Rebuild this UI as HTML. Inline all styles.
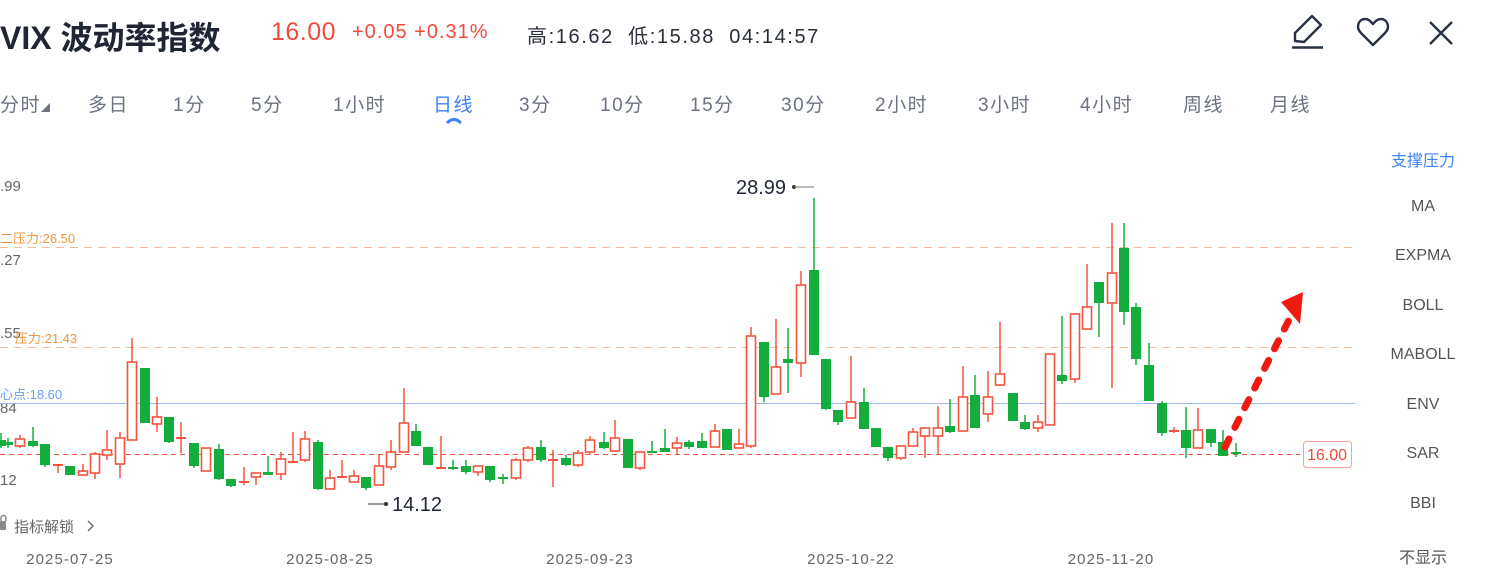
<!DOCTYPE html>
<html><head><meta charset="utf-8"><style>
body{margin:0;width:1497px;height:577px;background:#fff;overflow:hidden;position:relative;font-family:"Liberation Sans","Noto Sans CJK SC",sans-serif}
.a{position:absolute;white-space:nowrap}
.tab{position:absolute;top:90px;font-size:19px;color:#6b7280;letter-spacing:1.5px}
.side{position:absolute;left:1373px;width:100px;text-align:center;font-size:16px;color:#555}
.lbl{position:absolute;font-size:14px;color:#666}
.dt{position:absolute;top:551px;font-size:15px;color:#666;width:140px;text-align:center;letter-spacing:1.1px}
</style></head><body>
<div class="a" style="left:0;top:13px;font-size:32px;font-weight:bold;color:#1f2533">VIX 波动率指数</div>
<div class="a" style="left:271px;top:18px;font-size:25px;color:#f04b3c;letter-spacing:0.5px">16.00</div>
<div class="a" style="left:352px;top:21px;font-size:20px;color:#f04b3c;letter-spacing:1px">+0.05 +0.31%</div>
<div class="a" style="left:527px;top:20px;font-size:20px;color:#2a2f3a;letter-spacing:1.6px">高:16.62&nbsp;&nbsp;低:15.88&nbsp;&nbsp;04:14:57</div>
<svg class="a" style="left:1285px;top:10px" width="200" height="45" viewBox="0 0 200 45">
<path d="M10 31 L10 23 L27 6 L36 15 L19 32 Z" fill="none" stroke="#283244" stroke-width="2.4" stroke-linejoin="round"/>
<line x1="7" y1="37.5" x2="38" y2="37.5" stroke="#283244" stroke-width="2.4"/>
<path d="M88 35 L76 23 C70 17 74 9 80 9 C84 9 86 12 88 14 C90 12 92 9 96 9 C102 9 106 17 100 23 Z" fill="none" stroke="#283244" stroke-width="2.4" stroke-linejoin="round"/>
<path d="M145 12 L167 34 M167 12 L145 34" stroke="#283244" stroke-width="2.4"/>
</svg>
<div class="tab" style="left:0">分时<span style="font-size:9px">◢</span></div>
<div class="tab" style="left:88px">多日</div>
<div class="tab" style="left:173px">1分</div>
<div class="tab" style="left:251px">5分</div>
<div class="tab" style="left:333px">1小时</div>
<div class="tab" style="left:433px;color:#3a82f7">日线</div>
<svg class="a" style="left:445px;top:116px" width="18" height="8"><path d="M2 7 Q9 0 16 7" fill="none" stroke="#3a82f7" stroke-width="3"/></svg>
<div class="tab" style="left:519px">3分</div>
<div class="tab" style="left:600px">10分</div>
<div class="tab" style="left:690px">15分</div>
<div class="tab" style="left:781px">30分</div>
<div class="tab" style="left:875px">2小时</div>
<div class="tab" style="left:978px">3小时</div>
<div class="tab" style="left:1080px">4小时</div>
<div class="tab" style="left:1183px">周线</div>
<div class="tab" style="left:1270px">月线</div>

<div class="side" style="top:147px;color:#3a82f7">支撑压力</div>
<div class="side" style="top:198px">MA</div>
<div class="side" style="top:247px">EXPMA</div>
<div class="side" style="top:297px">BOLL</div>
<div class="side" style="top:346px">MABOLL</div>
<div class="side" style="top:396px">ENV</div>
<div class="side" style="top:445px">SAR</div>
<div class="side" style="top:495px">BBI</div>
<div class="side" style="top:544px">不显示</div>

<div class="lbl" style="left:0;top:178px;font-size:15px">.99</div>
<div class="lbl" style="left:0;top:252px;font-size:15px">.27</div>
<div class="lbl" style="left:0;top:325px;font-size:15px">.55</div>
<div class="lbl" style="left:0;top:400px;font-size:15px">84</div>
<div class="lbl" style="left:0;top:472px;font-size:15px">12</div>
<div class="lbl" style="left:0;top:228px;color:#f0963c;font-size:13px">二压力:26.50</div>
<div class="lbl" style="left:15px;top:328px;color:#f0963c;font-size:13px">压力:21.43</div>
<div class="lbl" style="left:0;top:384px;color:#6a9ff0;font-size:13px">心点:18.60</div>

<svg class="a" style="left:0;top:0" width="1497" height="577">
<line x1="0" y1="247.5" x2="1355" y2="247.5" stroke="#f0a070" stroke-opacity=".7" stroke-dasharray="8 6"/>
<line x1="0" y1="347.5" x2="1355" y2="347.5" stroke="#f0a070" stroke-opacity=".7" stroke-dasharray="8 6"/>
<line x1="0" y1="403.5" x2="1355" y2="403.5" stroke="#9ab8ee"/>
<line x1="0" y1="454.5" x2="1300" y2="454.5" stroke="#f5533d" stroke-dasharray="5 4"/>
<g id="c"></g>
<rect x="1303.5" y="441.5" width="48" height="26" rx="3" fill="#fff" stroke="#f5a09a"/>
<text x="1327" y="460" text-anchor="middle" font-size="16" fill="#f04b3c" font-family="Liberation Sans">16.00</text>
<text x="736" y="194" font-size="20" fill="#222a38" font-family="Liberation Sans">28.99</text>
<circle cx="794" cy="187" r="2" fill="#333"/><line x1="794" y1="187" x2="814" y2="187" stroke="#777"/>
<line x1="368" y1="504" x2="385" y2="504" stroke="#333"/><circle cx="386" cy="504" r="2" fill="#333"/>
<text x="392" y="511" font-size="20" fill="#222a38" font-family="Liberation Sans">14.12</text>
<path d="M1225 447 L1293 312" stroke="#f01a10" stroke-width="7" stroke-linecap="round" stroke-dasharray="9 13"/>
<path d="M1303 292 L1281 302 L1300 324 Z" fill="#f01a10"/>
<rect x="0" y="521" width="6" height="9" rx="1" fill="#888"/><path d="M1 521 V518 a2.5 2.5 0 0 1 5 0 V521" fill="none" stroke="#888" stroke-width="1.5"/>
<text x="14" y="532" font-size="15" fill="#666" font-family="Liberation Sans,Noto Sans CJK SC">指标解锁</text>
<path d="M88 521 L93 526 L88 531" fill="none" stroke="#666" stroke-width="1.4"/>
</svg>
<div class="dt" style="left:0px">2025-07-25</div>
<div class="dt" style="left:260px">2025-08-25</div>
<div class="dt" style="left:520px">2025-09-23</div>
<div class="dt" style="left:781px">2025-10-22</div>
<div class="dt" style="left:1041px">2025-11-20</div>
<script>
var d=[[1,440,446,433,448,'g'],[8,442,445,438,448,'g'],[20,439,446,435,448,'r'],[33,441,446,427,447,'g'],[45,444,465,444,467,'g'],[58,464,466,464,473,'r'],[70,466,475,466,475,'g'],[83,471,475,464,476,'r'],[95,454,473,452,479,'r'],[107,450,455,430,460,'r'],[120,438,464,432,478,'r'],[132,362,440,338,440,'r'],[145,368,423,368,423,'g'],[157,417,424,397,432,'r'],[169,417,442,417,443,'g'],[181,437,439,422,453,'r'],[194,443,466,443,468,'g'],[206,448,471,448,471,'r'],[219,449,479,444,480,'g'],[231,479,486,479,487,'g'],[244,481,483,467,485,'r'],[256,473,477,473,485,'r'],[268,472,475,456,475,'g'],[281,459,474,452,480,'r'],[293,461,463,432,463,'r'],[305,439,460,431,462,'r'],[318,442,489,440,490,'g'],[330,478,489,470,489,'r'],[342,476,478,460,478,'r'],[354,476,482,470,482,'r'],[366,477,488,477,490,'g'],[379,466,485,454,485,'r'],[391,452,467,440,470,'r'],[404,423,452,388,452,'r'],[416,431,446,424,446,'g'],[428,447,465,447,465,'g'],[441,467,469,436,469,'r'],[453,467,469,460,470,'g'],[466,466,472,460,474,'g'],[478,466,472,466,476,'r'],[490,466,480,466,482,'g'],[503,477,479,474,484,'g'],[516,460,478,458,480,'r'],[528,448,460,446,462,'r'],[541,447,460,440,462,'g'],[553,459,461,450,487,'r'],[566,458,465,455,466,'g'],[578,453,465,450,467,'r'],[590,440,452,436,454,'r'],[604,442,448,432,449,'g'],[615,438,451,420,451,'r'],[628,439,468,439,468,'g'],[640,452,468,452,470,'r'],[652,451,453,441,453,'g'],[665,448,452,429,452,'g'],[677,443,448,437,455,'r'],[689,442,447,440,449,'g'],[702,441,448,433,448,'g'],[715,431,447,424,447,'r'],[727,429,450,429,450,'g'],[739,444,448,429,448,'r'],[751,336,446,327,448,'r'],[764,342,397,342,402,'g'],[776,367,394,319,394,'r'],[788,359,363,328,393,'g'],[801,285,363,271,377,'r'],[814,270,355,198,355,'g'],[826,359,409,359,410,'g'],[838,410,422,410,425,'g'],[851,402,418,356,418,'r'],[864,402,429,388,429,'g'],[876,428,447,428,447,'g'],[888,447,458,447,461,'g'],[901,446,458,446,460,'r'],[913,432,446,428,446,'r'],[925,428,436,428,458,'r'],[938,428,436,406,454,'r'],[950,426,432,399,433,'g'],[963,397,431,366,431,'r'],[975,395,428,375,428,'g'],[988,397,414,371,422,'r'],[1000,374,385,322,385,'r'],[1013,393,421,393,421,'g'],[1025,422,429,415,430,'g'],[1038,422,428,415,432,'r'],[1050,354,425,354,425,'r'],[1062,375,381,316,384,'g'],[1075,314,379,314,383,'r'],[1087,307,329,264,329,'r'],[1099,282,303,282,337,'g'],[1112,273,303,223,388,'r'],[1124,248,312,223,325,'g'],[1136,307,359,303,365,'g'],[1149,365,401,343,401,'g'],[1162,403,433,401,436,'g'],[1174,430,432,427,433,'r'],[1186,430,448,407,458,'g'],[1198,430,448,408,448,'r'],[1211,429,443,429,447,'g'],[1223,442,456,430,456,'g'],[1236,452,454,443,457,'g']];
var s='';d.forEach(function(c){var col=c[5]=='r'?'#f5533d':'#12ad3c';var h=Math.max(2,c[2]-c[1]);
s+='<line x1="'+c[0]+'" x2="'+c[0]+'" y1="'+c[3]+'" y2="'+c[4]+'" stroke="'+col+'" stroke-width="1.5"/>';
if(c[5]=='r'&&h>3)s+='<rect x="'+(c[0]-4.5)+'" y="'+c[1]+'" width="9" height="'+h+'" fill="#fff" stroke="'+col+'" stroke-width="1.6"/>';
else s+='<rect x="'+(c[0]-5)+'" y="'+c[1]+'" width="10" height="'+h+'" fill="'+col+'"/>';});
document.getElementById('c').innerHTML=s;
</script>
</body></html>
